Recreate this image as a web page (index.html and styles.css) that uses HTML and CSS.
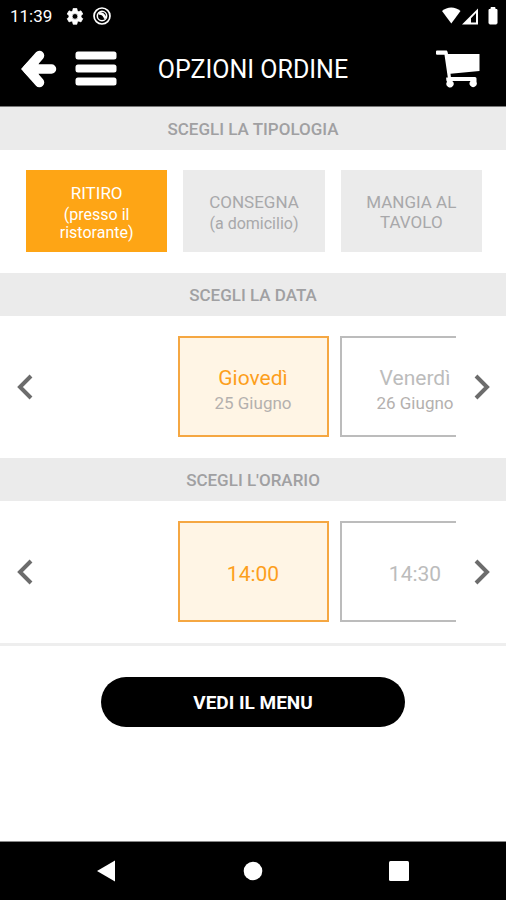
FILE: index.html
```html
<!DOCTYPE html>
<html lang="it">
<head>
<meta charset="utf-8">
<meta name="viewport" content="width=device-width, initial-scale=1">
<title>Opzioni ordine</title>
<link rel="stylesheet" href="styles.css">
</head>
<body>
<header class="top">
  <div class="status">
    <span class="clock">11:39</span>
    <svg class="status-gear" width="18" height="18" viewBox="0 0 24 24" aria-hidden="true"><path fill="#fff" stroke="#fff" fill-rule="evenodd" d="M9.500 2h5l.5 3 2 1.200 2.900-1.100 2.500 4.300-2.400 2v2.200l2.400 2-2.500 4.300-2.900-1.100-2 1.200-.5 3h-5l-.5-3-2-1.200-2.900 1.100-2.500-4.300 2.400-2v-2.200l-2.400-2 2.500-4.300 2.900 1.100 2-1.200zM12 8.700a3.800 3.800 0 1 0 0 7.600 3.800 3.800 0 0 0 0-7.600z"/></svg>
    <svg class="status-sync" width="18" height="18" viewBox="0 0 18 18" aria-hidden="true"><g fill="none" stroke="#fff"><circle cx="9" cy="9" r="8" stroke-width="1.700"/><circle cx="9" cy="9" r="4.700" stroke-width="1.500"/><path d="M5.500 6.500c3.500-.8 5.500 1 7 5" stroke-width="2.600"/></g></svg>
    <svg class="status-signal" width="56" height="18" viewBox="0 0 56 18" aria-hidden="true"><g fill="#fff"><path d="M0 4C5-.7 13.500-.7 18.500 4L9.300 16.500z"/><path fill-rule="evenodd" d="M36 1.500v16H20zM34 6v9.500h-5v-4.300z"/><path d="M47 2.500h2V.5h4v2h2V16q0 1-1 1h-6q-1 0-1-1z" stroke="#fff"/></g></svg>
  </div>
  <div class="bar">
    <div class="bar-left">
      <button class="icon-button" aria-label="Indietro"><svg width="36" height="38" viewBox="0 0 36 38"><path d="M18.500 5.500L6.500 19l12 13.500M8 19h22.500" fill="none" stroke="#fff" stroke-width="9.500" stroke-linecap="round" stroke-linejoin="round"/><path d="M0 19L10 8.500h7.500v21H10z" fill="#fff"/></svg></button>
      <button class="icon-button" aria-label="Menu"><svg width="42" height="38" viewBox="0 0 42 38"><g fill="#fff"><rect x="0.500" y="1.500" width="41" height="8" rx="2.500"/><rect x="0.500" y="14.500" width="41" height="8" rx="2.500"/><rect x="0.500" y="27.500" width="41" height="8" rx="2.500"/></g></svg></button>
    </div>
    <h1 class="title">OPZIONI ORDINE</h1>
    <button class="icon-button cart" aria-label="Carrello"><svg width="44" height="38" viewBox="0 0 44 38"><path d="M0 1.500q0-1 1-1h9.500q1 0 1.500 3.500h31.500v17L14.500 23.700l.4 3.300H39q1.500 0 1.500 1.500v3.500a3.600 3.600 0 1 1-6-1H16.300A3.600 3.600 0 1 1 11 31.800q-1-1.200-.8-4.300h1.600L8.500 4.700H1Q0 4.700 0 3.700z" fill="#fff"/></svg></button>
  </div>
</header>

<main>
  <section>
    <h2 class="band">SCEGLI LA TIPOLOGIA</h2>
    <div class="types">
      <button class="type type-on" aria-pressed="true">RITIRO<small class="type-note">(presso il ristorante)</small></button>
      <button class="type" aria-pressed="false">CONSEGNA<small class="type-note">(a domicilio)</small></button>
      <button class="type" aria-pressed="false">MANGIA AL TAVOLO</button>
    </div>
  </section>

  <section>
    <h2 class="band">SCEGLI LA DATA</h2>
    <div class="picker">
      <button class="arrow" aria-label="Data precedente"><svg width="18" height="26" viewBox="0 0 18 26"><path d="M15 2L4 13l11 11" fill="none" stroke="#6c6c6c" stroke-width="4"/></svg></button>
      <div class="track">
        <button class="card card-on" aria-pressed="true">Giovedì<small class="card-date">25 Giugno</small></button>
        <button class="card" aria-pressed="false">Venerdì<small class="card-date">26 Giugno</small></button>
      </div>
      <button class="arrow" aria-label="Data successiva"><svg width="18" height="26" viewBox="0 0 18 26"><path d="M4 2l11 11L4 24" fill="none" stroke="#6c6c6c" stroke-width="4"/></svg></button>
    </div>
  </section>

  <section class="last">
    <h2 class="band">SCEGLI L'ORARIO</h2>
    <div class="picker">
      <button class="arrow" aria-label="Orario precedente"><svg width="18" height="26" viewBox="0 0 18 26"><path d="M15 2L4 13l11 11" fill="none" stroke="#6c6c6c" stroke-width="4"/></svg></button>
      <div class="track">
        <button class="card card-on" aria-pressed="true">14:00</button>
        <button class="card" aria-pressed="false">14:30</button>
      </div>
      <button class="arrow" aria-label="Orario successivo"><svg width="18" height="26" viewBox="0 0 18 26"><path d="M4 2l11 11L4 24" fill="none" stroke="#6c6c6c" stroke-width="4"/></svg></button>
    </div>
  </section>

  <button class="submit">VEDI IL MENU</button>
</main>

<nav class="system" aria-label="Sistema">
  <button class="system-button" aria-label="Indietro"><svg width="22" height="22" viewBox="0 0 22 22"><path d="M1 11L19 0.500v21z" fill="#fff"/></svg></button>
  <button class="system-button" aria-label="Home"><svg width="22" height="22" viewBox="0 0 22 22"><circle cx="11" cy="11" r="9.300" fill="#fff"/></svg></button>
  <button class="system-button" aria-label="Recenti"><svg width="22" height="22" viewBox="0 0 22 22"><rect x="1" y="1" width="20" height="20" rx="1.500" fill="#fff"/></svg></button>
</nav>
</body>
</html>
```

FILE: styles.css
```css
* {
  box-sizing: border-box;
}

body {
  margin: 0;
  min-height: 100vh;
  display: flex;
  flex-direction: column;
  background: #fff;
  font-family: Roboto, "Liberation Sans", sans-serif;
}

button {
  margin: 0;
  padding: 0;
  border: 0;
  background: none;
  font: inherit;
  color: inherit;
  cursor: pointer;
}

svg {
  display: block;
}

.top {
  background: #000;
  color: #fff;
  border-bottom: 1px solid #777;
}

.status {
  display: flex;
  align-items: center;
  height: 32px;
  padding: 0 8px 0 10px;
}

.clock {
  font-size: 17px;
  line-height: 32px;
}

.status-gear {
  margin-left: 14px;
}

.status-sync {
  margin-left: 9px;
}

.status-signal {
  margin-left: auto;
}

.bar {
  display: grid;
  grid-template-columns: 1fr auto 1fr;
  align-items: center;
  height: 74px;
  padding: 0 21px;
}

.bar-left {
  display: flex;
  gap: 18px;
}

.title {
  margin: 0;
  padding-top: 2px;
  font-size: 25px;
  line-height: 32px;
  font-weight: 400;
}

.cart {
  justify-self: end;
  padding-right: 5px;
}

.band {
  margin: 0;
  padding-top: 2px;
  background: #ebebeb;
  color: #a0a0a2;
  font-size: 17px;
  line-height: 41px;
  font-weight: 500;
  text-align: center;
}

.types {
  display: grid;
  grid-template-columns: repeat(3, 1fr);
  gap: 16px;
  padding: 20px 24px 21px 26px;
}

.type {
  min-height: 82px;
  padding: 2px 20px 0;
  background: #ebebeb;
  color: #a8a8aa;
  font-size: 17px;
  line-height: 20px;
}

.type-on {
  background: #fea515;
  color: #fff;
}

.type-note {
  display: block;
  padding-top: 3px;
  font-size: 16px;
  line-height: 18px;
}

.picker {
  display: flex;
  align-items: center;
  padding: 20px 0 21px;
}

.arrow {
  flex: 0 0 50px;
  display: grid;
  place-items: center;
  height: 50px;
}

.track {
  flex: 1;
  min-width: 0;
  overflow: hidden;
  display: grid;
  grid-template-columns: repeat(3, 151px);
  gap: 11px;
  justify-content: center;
}

.card {
  min-height: 101px;
  padding-top: 4px;
  border: 2px solid #bcbcbc;
  color: #bcbcbc;
  font-size: 21px;
  line-height: 28px;
}

.card-on {
  grid-column: 2;
  border-color: #f5a742;
  background: #fff5e5;
  color: #fd9f1c;
}

.card-date {
  display: block;
  color: #b4b0ae;
  font-size: 17px;
  line-height: 22px;
}

.last {
  border-bottom: 3px solid #eee;
}

.submit {
  display: block;
  width: 60%;
  height: 50px;
  margin: 31px auto;
  border-radius: 25px;
  background: #000;
  color: #fff;
  font-size: 19px;
  font-weight: 700;
}

.system {
  display: flex;
  justify-content: center;
  height: 59px;
  margin-top: auto;
  border-top: 1px solid #888;
  background: #000;
}

.system-button {
  width: 146px;
  display: grid;
  place-items: center;
}
```
